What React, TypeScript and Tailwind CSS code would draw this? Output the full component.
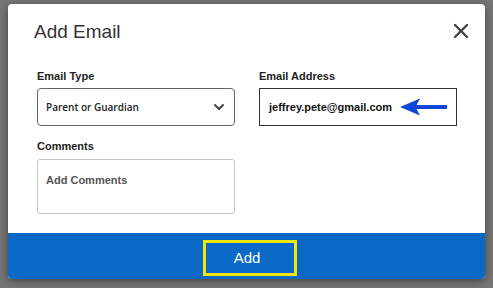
import { X, ChevronDown } from 'lucide-react'

// Blue annotation arrow pointing at the email value
function PointerArrow() {
  return (
    <svg width="48" height="18" viewBox="0 0 48 18" className="absolute left-[140px] top-[9px]">
      <path d="M0 9 L20 0.5 L15.5 9 L20 17.5 Z" fill="#0b47d9" />
      <rect x="15" y="7" width="32" height="4" fill="#0b47d9" />
    </svg>
  )
}

export default function App() {
  return (
    <div className="min-h-screen w-full bg-[#767676] pt-[4px] pl-[8px] font-['Liberation_Sans',Arial,sans-serif]">
      <div className="w-[477px] h-[275px] bg-white rounded-[4px] overflow-hidden flex flex-col shadow-[0_2px_8px_rgba(0,0,0,0.45)]">
        {/* Header */}
        <div className="flex items-center justify-between pt-[16px] pl-[26px] pr-[12px]">
          <h1 className="text-[19px] leading-[24px] text-[#333]">Add Email</h1>
          <X size={24} strokeWidth={2.4} className="text-[#444] -mt-[2px]" />
        </div>

        {/* Form */}
        <div className="mt-[25px] pl-[29px] grid grid-cols-[198px_198px] gap-x-[24px]">
          <div>
            <label className="block text-[11px] leading-[14px] font-bold text-[#222] mb-[5px]">Email Type</label>
            <div className="h-[38px] border border-[#666] rounded-[4px] flex items-center justify-between pl-[8px] pr-[7px]">
              <span className="font-['Open_Sans',sans-serif] text-[10px] font-semibold text-[#222]">Parent or Guardian</span>
              <ChevronDown size={16} strokeWidth={3} className="text-[#444]" />
            </div>
          </div>
          <div>
            <label className="block text-[11px] leading-[14px] font-bold text-[#222] mb-[5px]">Email Address</label>
            <div className="relative h-[38px] border border-[#333] flex items-center pl-[9px]">
              <span className="text-[11px] font-bold text-[#111]">jeffrey.pete@gmail.com</span>
              <PointerArrow />
            </div>
          </div>
          <div className="mt-[13px]">
            <label className="block text-[11px] leading-[14px] font-bold text-[#222] mb-[6px]">Comments</label>
            <div className="h-[55px] border border-[#c4c4c4] rounded-[3px] pt-[13px] pl-[8px]">
              <span className="block text-[11px] leading-[14px] font-bold text-[#555]">Add Comments</span>
            </div>
          </div>
        </div>

        {/* Footer */}
        <div className="mt-auto h-[46px] bg-[#0a69c7] pt-[7px] pl-[195px]">
          <button className="w-[94px] h-[36px] border-[3px] border-[#f4e600] flex items-center justify-center pr-[6px] text-[15px] text-white">
            Add
          </button>
        </div>
      </div>
    </div>
  )
}
